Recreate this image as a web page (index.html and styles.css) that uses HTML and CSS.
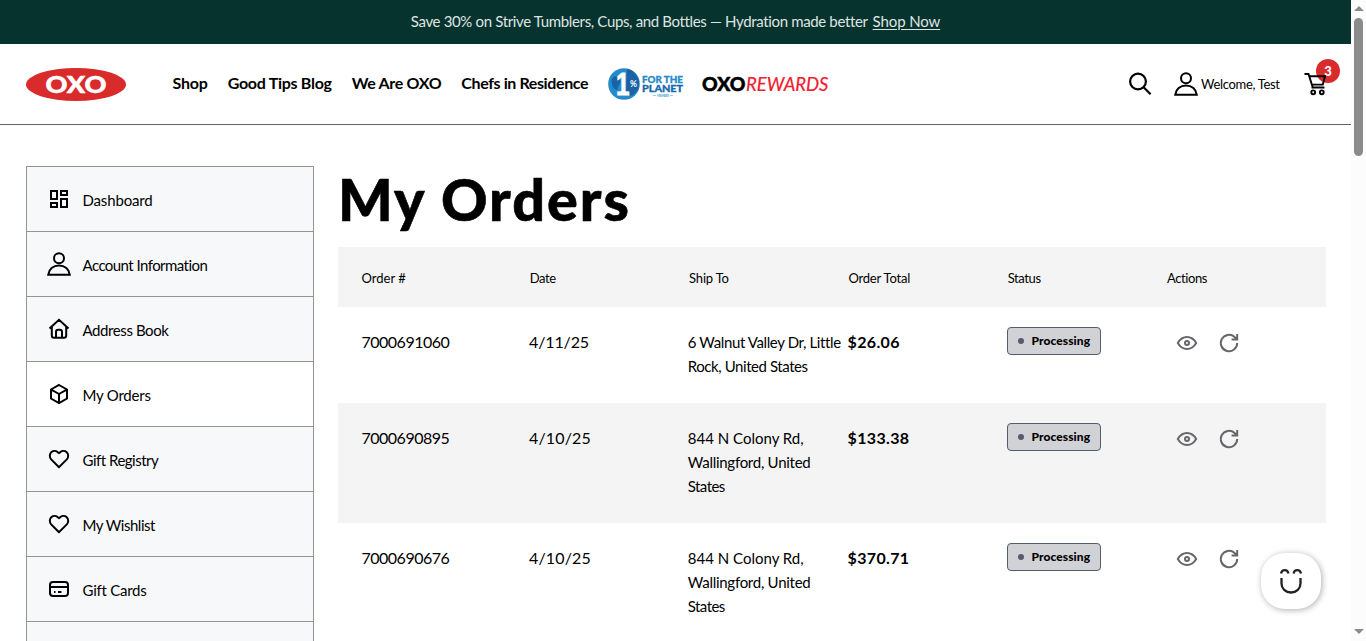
FILE: index.html
```html
<!DOCTYPE html>
<html lang="en">
<head>
<meta charset="utf-8">
<title>My Orders</title>
<link rel="stylesheet" href="styles.css">
</head>
<body>
<svg class="defs" aria-hidden="true">
  <symbol id="user" viewBox="0 0 24 24"><circle cx="12" cy="6.200" r="5"/><path d="M1.200 22.800C1.800 17.200 6.200 13.600 12 13.600s10.200 3.600 10.800 9.200z"/></symbol>
  <symbol id="heart" viewBox="0 0 24 24"><path d="M12 20.200 4.200 12.400C2.200 10.300 2.400 6.900 4.500 5c2-1.700 4.900-1.300 6.600.5l.9.600.9-.600c1.700-1.800 4.600-2.200 6.600-.5 2.100 1.900 2.300 5.300.3 7.400z"/></symbol>
  <symbol id="eye" viewBox="0 0 24 24"><path d="M2.800 12C5 8.200 8.300 6 12 6s7 2.200 9.200 6c-2.200 3.800-5.500 6-9.200 6s-7-2.200-9.200-6z"/><circle cx="12" cy="12" r="2"/></symbol>
  <symbol id="reload" viewBox="0 0 24 24"><path d="M20.200 12a8.200 8.200 0 1 1-2.600-6l2.400 2.400M20.200 3v5.600h-5.600"/></symbol>
</svg>
<div class="window">
  <div class="page">
    <div class="promo"><span class="promo-text">Save 30% on Strive Tumblers, Cups, and Bottles — Hydration made better</span><a class="promo-link">Shop Now</a></div>
    <header class="header">
      <svg class="logo" viewBox="0 0 100 33"><ellipse cx="50" cy="16.500" rx="50" ry="16.500"/><text x="19.500" y="24.800" textLength="61" lengthAdjust="spacingAndGlyphs">OXO</text></svg>
      <nav class="nav">
        <a class="nav-shop">Shop</a><a class="nav-blog">Good Tips Blog</a><a class="nav-about">We Are OXO</a><a class="nav-chefs">Chefs in Residence</a>
      </nav>
      <svg class="planet" viewBox="0 0 76 34">
        <circle class="globe" cx="16" cy="17" r="15.800"/>
        <path class="land" d="M4 12c3-5 7-2 8 1s-2 6-3 10c-4-1-6-6-5-11zM19 2c7 1 11 7 12 13l-1 8-6 6-6-3z"/>
        <text class="one" x="8" y="28" textLength="13.500" lengthAdjust="spacingAndGlyphs">1</text>
        <text class="percent" x="22" y="19.500">%</text>
        <text class="word top" x="34" y="15.500" textLength="41" lengthAdjust="spacingAndGlyphs">FOR THE</text>
        <text class="word bottom" x="34" y="24.500" textLength="41" lengthAdjust="spacingAndGlyphs">PLANET</text>
        <text class="member" x="49" y="29.500" textLength="12">MEMBER</text>
        <path class="dash" d="M45 28.500h3M62 28.500h3"/>
      </svg>
      <svg class="rewards" viewBox="0 0 130 24"><text class="oxo" x="1" y="18.800" textLength="43.500" lengthAdjust="spacingAndGlyphs">OXO</text><text class="rw" x="45" y="18.800" textLength="82.500">REWARDS</text></svg>
      <div class="tools">
        <svg class="search" viewBox="0 0 24 24"><circle cx="10" cy="9.500" r="7.900"/><path d="m15.600 15.200 7 7"/></svg>
        <svg class="user"><use href="#user"/></svg>
        <span class="welcome">Welcome, Test</span>
        <div class="cart">
          <span class="count">3</span>
          <svg viewBox="0 0 24 24"><path d="M.5 2H4.500l4.300 13.500H20M5.200 4.300H21L18.800 12.600H8M7.500 15.600H20.500"/><circle cx="9.200" cy="20.300" r="1.900"/><circle cx="17.800" cy="20.300" r="1.900"/></svg>
        </div>
      </div>
    </header>
    <div class="content">
      <aside class="menu">
        <a class="item"><svg viewBox="0 0 24 24"><path d="M4 4h6v8H4zM14 4h6v4h-6zM4 16h6v4H4zM14 12h6v8h-6z"/></svg><span class="t-dash">Dashboard</span></a>
        <a class="item"><svg><use href="#user"/></svg><span class="t-account">Account Information</span></a>
        <a class="item"><svg viewBox="0 0 24 24"><path d="M2.500 11.500 12 2.800l9.500 8.700M4.800 10v8.500c0 1.500.7 2.300 2.200 2.300h10c1.500 0 2.200-.8 2.200-2.300V10M9 20.500V15c0-1.500.8-2.200 2.200-2.200h1.600c1.400 0 2.200.7 2.200 2.200v5.500"/></svg><span class="t-address">Address Book</span></a>
        <a class="item current"><svg viewBox="0 0 24 24"><path d="m12 3 8 4.500v9L12 21l-8-4.500v-9zM12 12v9M12 12 4.200 7.600M12 12l7.800-4.400"/></svg><span class="t-orders">My Orders</span></a>
        <a class="item"><svg><use href="#heart"/></svg><span class="t-registry">Gift Registry</span></a>
        <a class="item"><svg><use href="#heart"/></svg><span class="t-wishlist">My Wishlist</span></a>
        <a class="item"><svg viewBox="0 0 24 24"><rect x="3" y="5" width="18" height="14" rx="3"/><path d="M3 10h18M7 15h1.500M11 15h3.500"/></svg><span class="t-cards">Gift Cards</span></a>
        <a class="item"></a>
      </aside>
      <main class="main">
        <h1>My Orders</h1>
        <div class="row head"><span class="h-order">Order #</span><span class="h-date">Date</span><span class="h-ship">Ship To</span><span class="h-ship">Order Total</span><span class="h-date">Status</span><span class="h-date">Actions</span></div>
        <div class="row">
          <span class="id">7000691060</span><span class="date tight">4/11/25</span>
          <span class="ship"><span class="walnut">6 Walnut Valley Dr, Little</span><br><span class="rock">Rock, United States</span></span>
          <b class="total">$26.06</b><span><span class="badge">Processing</span></span>
          <span class="actions"><svg><use href="#eye"/></svg><svg><use href="#reload"/></svg></span>
        </div>
        <div class="row shaded">
          <span class="id">7000690895</span><span class="date">4/10/25</span>
          <span class="ship">844 N Colony Rd,<br><span class="walling">Wallingford, United</span><br><span class="states">States</span></span>
          <b class="total">$133.38</b><span><span class="badge">Processing</span></span>
          <span class="actions"><svg><use href="#eye"/></svg><svg><use href="#reload"/></svg></span>
        </div>
        <div class="row">
          <span class="id">7000690676</span><span class="date">4/10/25</span>
          <span class="ship">844 N Colony Rd,<br><span class="walling">Wallingford, United</span><br><span class="states">States</span></span>
          <b class="total">$370.71</b><span><span class="badge">Processing</span></span>
          <span class="actions"><svg><use href="#eye"/></svg><svg><use href="#reload"/></svg></span>
        </div>
      </main>
    </div>
  </div>
  <div class="scrollbar"><i class="up"></i><i class="thumb"></i><i class="down"></i></div>
  <div class="chat"><svg viewBox="0 0 24 28"><path d="M2 6.500C3 2 8.500 2 9.500 6.500M14.500 6.500c1-4.500 6.500-4.500 7.500 0M2.500 11v5.500c0 5 4 9 9.500 9s9.500-4 9.500-9V11"/></svg></div>
</div>
</body>
</html>
```
FILE: styles.css
```css
* { box-sizing: border-box; }
body { margin: 0; overflow: hidden; font-family: Lato, "Liberation Sans", sans-serif; font-size: 15px; color: #000; background: #fff; }
svg { display: block; flex: none; fill: none; stroke: currentColor; stroke-width: 2; overflow: visible; }
svg text { stroke: none; }
.defs { position: absolute; width: 0; height: 0; }
.window { display: flex; height: 641px; overflow: hidden; }
.page { flex: 1; min-width: 0; }

.promo { height: 44px; padding-bottom: 2px; background: #07332f; color: #dfe4e2; display: flex; align-items: center; justify-content: center; gap: 5px; line-height: 20px; }
.promo-text { letter-spacing: -.35px; }
.promo-link { letter-spacing: -.12px; text-decoration: underline; text-underline-offset: 2px; }

.header { height: 81px; border-bottom: 1px solid #626266; display: flex; align-items: center; padding-left: 26px; }
.logo { width: 100px; height: 33px; margin-top: 1px; }
.logo ellipse { fill: #da2b2c; stroke: none; }
.logo text { fill: #fff; stroke: #fff; stroke-width: .5; font-weight: 900; font-size: 23.500px; }
.nav { display: flex; gap: 20px; margin: -3px 0 0 46.500px; font-size: 16px; font-weight: 700; }
.nav a { white-space: nowrap; }
.nav-shop { letter-spacing: -.2px; }
.nav-blog { letter-spacing: -.28px; }
.nav-about { letter-spacing: -.31px; }
.nav-chefs { letter-spacing: -.39px; }
.planet { width: 76px; height: 34px; margin-left: 19.500px; }
.globe { fill: #238bc9; stroke: none; }
.land { fill: #1a62a5; stroke: none; }
.one { fill: #fff; font: 700 31px "Liberation Sans", sans-serif; }
.planet .one { stroke: #fff; stroke-width: .8; }
.percent { fill: #fff; font: 700 8.500px Lato, sans-serif; }
.word { font: 900 9.500px Lato, sans-serif; }
.planet .top { fill: #238bc9; stroke: #238bc9; stroke-width: .3; }
.planet .bottom { fill: #1769ae; stroke: #1769ae; stroke-width: .3; }
.member { fill: #56aedb; font: 900 3px Lato, sans-serif; }
.dash { stroke: #56aedb; stroke-width: .6; }
.rewards { width: 130px; height: 24px; margin-left: 17px; }
.oxo { font: 900 18px Lato, sans-serif; fill: #000; }
.rewards .oxo { stroke: #000; stroke-width: .5; }
.rw { font: italic 400 18.500px Lato, sans-serif; fill: #f0202f; }
.rewards .rw { stroke: #f0202f; stroke-width: .2; }
.tools { margin-left: auto; display: flex; align-items: center; }
.search { width: 24px; height: 24px; margin-right: 22px; stroke-width: 2.200; }
.user { width: 24px; height: 24px; }
.welcome { width: 80px; margin: 0 23px 0 3px; font-size: 13px; letter-spacing: -.32px; white-space: nowrap; }
.cart { position: relative; width: 24px; height: 24px; margin-right: 23px; }
.cart svg { position: relative; width: 24px; height: 24px; stroke-width: 1.900; }
.count { position: absolute; left: 12px; top: -13px; width: 24px; height: 24px; border-radius: 50%; background: #da2b2c; color: #fff; font-size: 13px; font-weight: 900; line-height: 24px; text-align: center; }

.content { display: grid; grid-template-columns: 288px 988px; column-gap: 24px; padding: 41px 0 0 26px; }
.menu { border: 1px solid #939498; }
.item { height: 65px; padding-left: 20px; display: flex; align-items: center; gap: 11.500px; background: #f7f8fa; border-bottom: 1px solid #939498; white-space: nowrap; }
.item svg { width: 24px; height: 24px; }
.item span { margin-top: 2px; }
.current { background: #fff; }
.t-dash { letter-spacing: -.15px; }
.t-account { letter-spacing: -.55px; }
.t-address { letter-spacing: -.41px; }
.t-orders { letter-spacing: -.23px; }
.t-registry { letter-spacing: -.5px; }
.t-wishlist { letter-spacing: -.48px; }
.t-cards { letter-spacing: -.25px; }

h1 { margin: 0; height: 81px; font-size: 57.500px; line-height: 66px; font-weight: 900; letter-spacing: 2px; -webkit-text-stroke: .6px #000; }
.row { display: grid; grid-template-columns: 167.500px repeat(5, 159.300px); padding: 23px 0 25px 23.500px; line-height: 24px; white-space: nowrap; }
.head { height: 60px; padding-top: 19px; background: #f4f4f4; font-size: 13px; }
.head span { position: relative; }
.shaded { background: #f4f4f4; }
.h-date { letter-spacing: -.4px; margin-left: .8px; }
.h-ship { letter-spacing: -.2px; margin-left: .8px; }
.id { font-size: 16px; letter-spacing: -.5px; }
.date { font-size: 16px; letter-spacing: .16px; }
.tight { letter-spacing: -.12px; }
.ship { margin-left: -.5px; }
.walnut { letter-spacing: -.38px; }
.rock { letter-spacing: -.43px; }
.walling { letter-spacing: -.27px; }
.states { letter-spacing: -.55px; }
.total { font-size: 16px; letter-spacing: .33px; }
.badge { display: flex; align-items: center; width: 94px; height: 28px; margin: -3px 0 0 .5px; padding-left: 10px; gap: 7px; border: 1px solid #545b6b; border-radius: 4px; background: #d1d2d6; font-size: 12px; font-weight: 900; letter-spacing: .1px; }
.badge::before { content: ""; width: 6px; height: 6px; border-radius: 50%; background: #545b6b; }
.actions { display: flex; gap: 18px; padding: 1px 0 0 8.500px; color: #66676b; }
.actions svg { width: 24px; height: 24px; }

.scrollbar { width: 15px; background: #fcfcfc; display: flex; flex-direction: column; align-items: center; padding: 6px 0 7px; }
.up, .down { border: 5px solid transparent; border-top-width: 0; border-bottom: 5px solid #8b8b8b; }
.down { margin-top: auto; border-bottom-width: 0; border-top: 5px solid #8b8b8b; }
.thumb { width: 9px; height: 138px; margin-top: 7px; border-radius: 5px; background: #8b8b8b; }
.chat { position: absolute; left: 1261px; top: 553px; width: 60px; height: 56px; border-radius: 24px; background: #fff; box-shadow: 1px 1px 6px rgba(0,0,0,.32); display: flex; align-items: center; justify-content: center; }
.chat svg { width: 24px; height: 28px; color: #222; stroke-width: 2.300; }
```
